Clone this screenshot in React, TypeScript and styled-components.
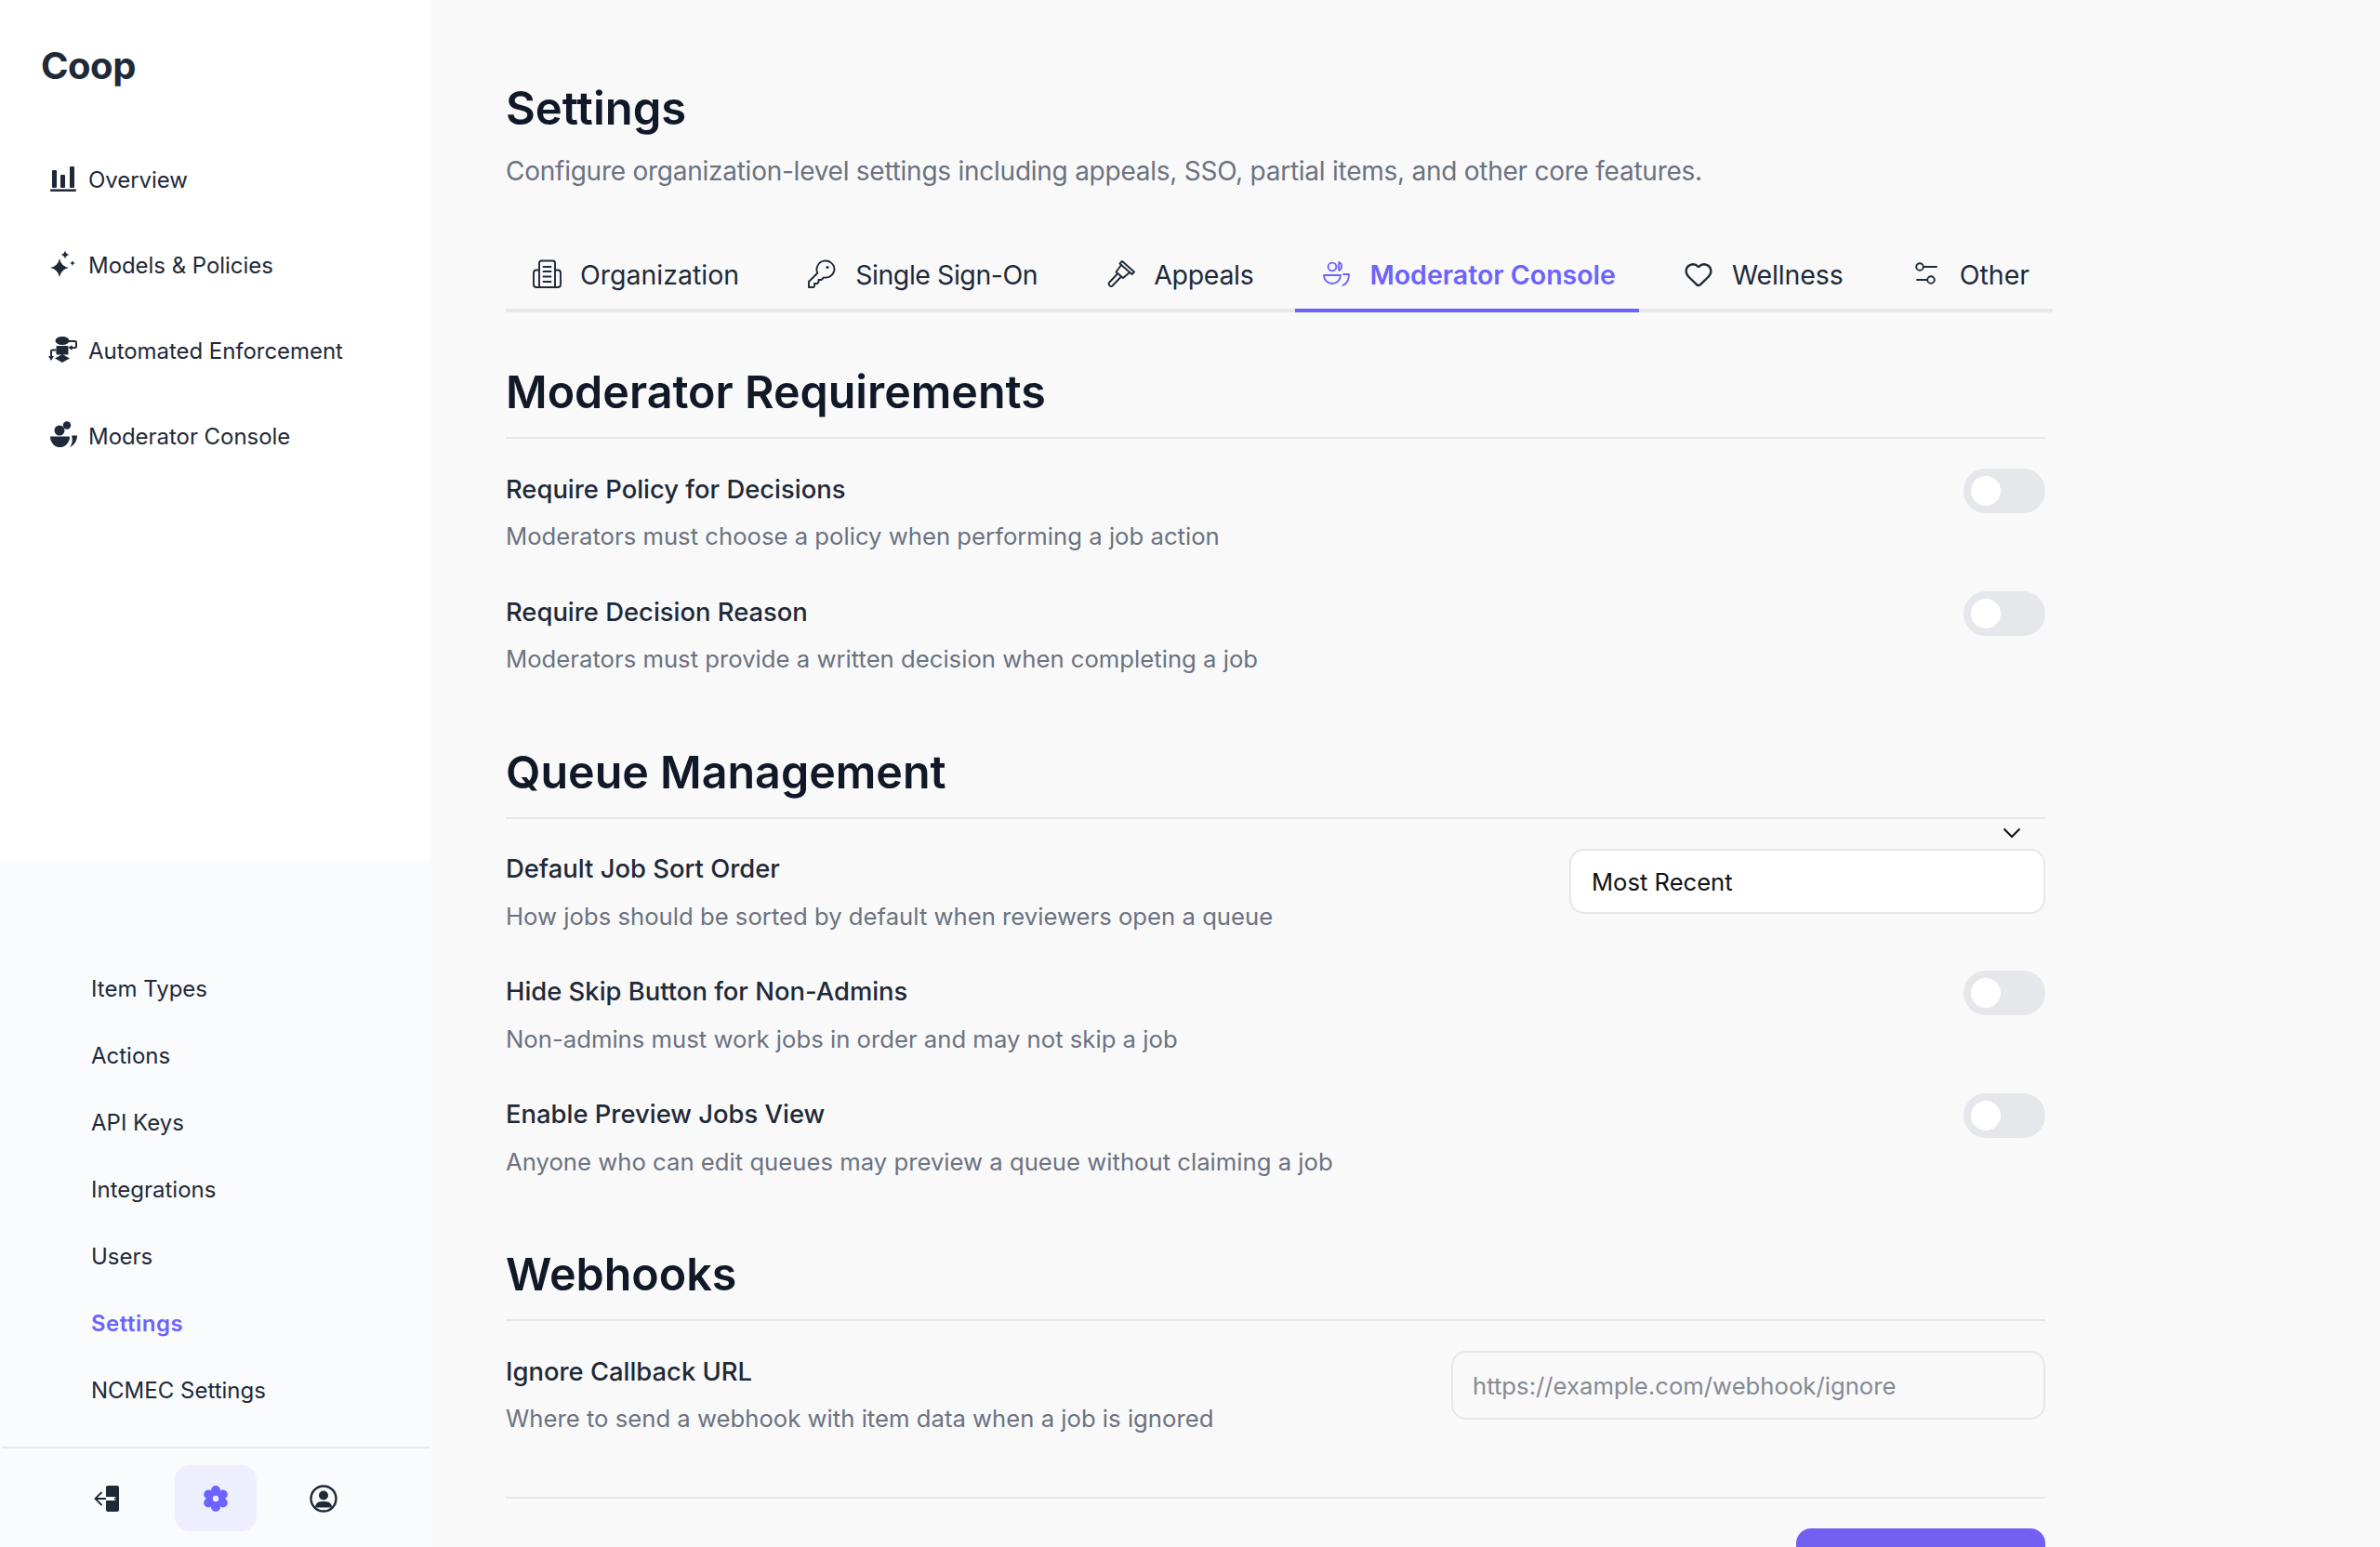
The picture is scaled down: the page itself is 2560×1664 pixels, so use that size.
import React from "react";
import styled, { createGlobalStyle } from "styled-components";
import { Heart } from "lucide-react";

const GlobalStyle = createGlobalStyle`
  html, body {
    margin: 0;
    padding: 0;
    height: 1664px;
    overflow: hidden;
    background: #f9f9fa;
    font-family: "Inter", "Liberation Sans", sans-serif;
    color: #1f2937;
  }
  * {
    box-sizing: border-box;
  }
`;

const DARK = "#1f2937";
const PURPLE = "#6c63ff";

const Star = ({ cx, cy, r }: { cx: number; cy: number; r: number }) => {
  const k = r * 0.16;
  return (
    <path
      d={`M${cx} ${cy - r}Q${cx + k} ${cy - k} ${cx + r} ${cy}Q${cx + k} ${cy + k} ${cx} ${cy + r}Q${cx - k} ${cy + k} ${cx - r} ${cy}Q${cx - k} ${cy - k} ${cx} ${cy - r}Z`}
    />
  );
};

const OverviewIcon = () => (
  <svg width="32" height="32" viewBox="0 0 32 32" fill={DARK}>
    <rect x="4" y="6" width="5" height="19" rx="1" />
    <rect x="13" y="11" width="5" height="14" rx="1" />
    <rect x="23" y="2" width="5" height="23" rx="1" />
    <rect x="2" y="26.5" width="28" height="2.4" rx="1" />
  </svg>
);

const ModelsIcon = () => (
  <svg width="32" height="32" viewBox="0 0 32 32" fill={DARK}>
    <Star cx={12} cy={19} r={10} />
    <Star cx={18} cy={5} r={4.6} />
    <Star cx={26} cy={14} r={2.8} />
  </svg>
);

const AutomationIcon = () => (
  <svg width="32" height="32" viewBox="0 0 32 32" fill={DARK}>
    <ellipse cx="15" cy="5.5" rx="7.5" ry="4.6" />
    <rect x="8.5" y="11" width="13" height="9.5" rx="1" />
    <path d="M15 20L23 24.5L15 29L7 24.5Z" />
    <path
      d="M22 6H28.5Q30 6 30 7.5V11.5Q30 13 28.5 13H24M8.5 15.5H4.5Q3 15.5 3 17V22"
      fill="none"
      stroke={DARK}
      strokeWidth="2"
    />
    <path d="M21.5 13L25.5 10V16ZM3 27L0 22H6Z" />
  </svg>
);

const ModeratorIcon = () => (
  <svg width="32" height="32" viewBox="0 0 32 32" fill={DARK}>
    <circle cx="12" cy="10" r="5.5" />
    <circle cx="20" cy="4.5" r="4.2" />
    <path d="M2 16.5H23A10.5 11.5 0 0 1 2 16.5Z" />
    <path d="M25 15.5H31C31 21 28 26 23 28C26 24 26.5 20 25 15.5Z" />
  </svg>
);

const LogoutIcon = () => (
  <svg width="32" height="32" viewBox="0 0 32 32">
    <rect x="14" y="2" width="14" height="28" rx="2" fill={DARK} />
    <path d="M23 16H2.5M9 9.5L2.5 16L9 22.5" fill="none" stroke="#fafbfd" strokeWidth="4" strokeLinecap="round" />
    <path d="M24 16H2.5M9 9.5L2.5 16L9 22.5" fill="none" stroke={DARK} strokeWidth="1.8" strokeLinecap="round" />
    <path d="M14 14.2H23V17.8H14Z" fill="#fafbfd" />
  </svg>
);

const GearIcon = () => (
  <svg width="32" height="32" viewBox="0 0 32 32" fill={PURPLE}>
    <circle cx="16" cy="7" r="5" />
    <circle cx="16" cy="25" r="5" />
    <circle cx="8.2" cy="11.5" r="5" />
    <circle cx="23.8" cy="11.5" r="5" />
    <circle cx="8.2" cy="20.5" r="5" />
    <circle cx="23.8" cy="20.5" r="5" />
    <circle cx="16" cy="16" r="8" />
    <circle cx="16" cy="16" r="3.2" fill="#edefff" />
  </svg>
);

const UserCircleIcon = () => (
  <svg width="32" height="32" viewBox="0 0 32 32">
    <circle cx="16" cy="16" r="13.5" fill="none" stroke={DARK} strokeWidth="2.4" />
    <circle cx="16" cy="12.5" r="5" fill={DARK} />
    <path d="M7 24.5C8 20 11 19 16 19C21 19 24 20 25 24.5L23.5 25.5H8.5Z" fill={DARK} />
  </svg>
);

const OrgIcon = () => (
  <svg width="32" height="32" viewBox="0 0 32 32" fill="none" stroke="currentColor" strokeWidth="1.9" strokeLinecap="round" strokeLinejoin="round">
    <path d="M8 30V4Q8 1.5 10.5 1.5H22.5Q25 1.5 25 4V30Z" />
    <path d="M8 11.5H5Q2 11.5 2 14.5V27Q2 30 5 30H28Q31 30 31 27V14.5Q31 11.5 28 11.5H25" />
    <path d="M12.5 8H20.5M12.5 13H20.5M12.5 18.5H20.5M12.5 24H20.5" />
  </svg>
);

const KeyIcon = () => (
  <svg width="32" height="32" viewBox="0 0 32 32" fill="none" stroke="currentColor" strokeWidth="1.9" strokeLinejoin="round">
    <path d="M29.5 11A9.5 9.5 0 1 0 11.3 14.8L2 24V30H7L8 29V26H11L12.5 24.5V22H15.5L18.1 19.4A9.5 9.5 0 0 0 29.5 11Z" />
    <circle cx="22" cy="8.5" r="1.6" fill="currentColor" stroke="none" />
  </svg>
);

const GavelIcon = () => (
  <svg width="32" height="32" viewBox="0 0 32 32" fill="none" stroke="currentColor" strokeWidth="1.9" strokeLinejoin="round" strokeLinecap="round">
    <path d="M18 2L31 13.5L28.5 16L15.5 4.5Z" />
    <path d="M17 6L11.5 13.5L19 20L25.5 14.5" />
    <path d="M12.5 16L4 25A2 2 0 0 0 4 27.5L5 28.5A2 2 0 0 0 7.5 28.5L16.5 19" />
  </svg>
);

const ConsoleIcon = () => (
  <svg width="32" height="32" viewBox="0 0 32 32" fill="none" stroke="currentColor" strokeWidth="1.9" strokeLinejoin="round" strokeLinecap="round">
    <circle cx="12" cy="8" r="4.4" />
    <path d="M19.5 3A5 5 0 0 1 22 7.5A5 5 0 0 1 19.5 12Q18 7.5 19.5 3Z" />
    <path d="M3 17H21A9 9 0 0 1 3 17Z" />
    <path d="M24 16H30C30 21 28 26 23.5 28" />
  </svg>
);

const SlidersIcon = () => (
  <svg width="32" height="32" viewBox="0 0 32 32" fill="none" stroke="currentColor" strokeWidth="1.9" strokeLinecap="round">
    <circle cx="9" cy="8" r="3.8" />
    <path d="M13 8H27M6 22H17" />
    <circle cx="21" cy="22" r="3.8" />
  </svg>
);

const Page = styled.div`
  display: flex;
  height: 1664px;
  overflow: hidden;
`;

const Sidebar = styled.aside`
  width: 464px;
  flex: none;
  display: flex;
  flex-direction: column;
  background: #fff;
`;

const SidebarTop = styled.div`
  height: 925px;
  flex: none;
`;

const Logo = styled.div`
  height: 147px;
  padding: 49px 0 0 44px;
  font-size: 40px;
  line-height: 44px;
  font-weight: 700;
  letter-spacing: -0.5px;
  color: #1f2937;
`;

const NavItem = styled.div`
  height: 92px;
  padding-left: 52px;
  display: flex;
  align-items: center;
  gap: 11px;
  font-size: 24px;
  letter-spacing: -0.05px;
  color: #1f2937;
`;

const SidebarBottom = styled.div`
  flex: 1;
  display: flex;
  flex-direction: column;
  padding-top: 102px;
  background: #fafbfd;
`;

const SubItem = styled.div<{ $active?: boolean }>`
  height: 72px;
  padding-left: 98px;
  display: flex;
  align-items: center;
  font-size: 24px;
  font-weight: ${(p) => (p.$active ? 600 : 400)};
  letter-spacing: ${(p) => (p.$active ? "0.5px" : "0")};
  color: ${(p) => (p.$active ? PURPLE : "#1f2937")};
`;

const IconBar = styled.div`
  margin: 25px 2px 0;
  padding-top: 18px;
  border-top: 2px solid #e5e7eb;
  display: flex;
  justify-content: center;
  gap: 28px;
`;

const IconButton = styled.button<{ $active?: boolean }>`
  width: 88px;
  height: 71px;
  padding: 0;
  border: none;
  border-radius: 16px;
  display: flex;
  align-items: center;
  justify-content: center;
  background: ${(p) => (p.$active ? "#edefff" : "transparent")};
`;

const Main = styled.main`
  width: 1744px;
  flex: none;
  padding: 90px 0 0 80px;
`;

const Title = styled.h1`
  margin: 0;
  font-size: 49px;
  line-height: 54px;
  font-weight: 600;
  color: #111827;
`;

const Subtitle = styled.p`
  margin: 22px 0 0;
  font-size: 28px;
  line-height: 36px;
  letter-spacing: -0.25px;
  color: #6b7280;
`;

const Tabs = styled.div`
  width: 1664px;
  height: 78px;
  margin-top: 56px;
  display: flex;
  gap: 20px;
  border-bottom: 4px solid #e5e7eb;
`;

const Tab = styled.div<{ $active?: boolean; $tracking: number }>`
  flex: none;
  height: 78px;
  padding: 0 25px 0 28px;
  display: flex;
  align-items: center;
  gap: 20px;
  white-space: nowrap;
  font-size: 28.5px;
  letter-spacing: ${(p) => p.$tracking}px;
  font-weight: ${(p) => (p.$active ? 600 : 400)};
  color: ${(p) => (p.$active ? PURPLE : "#1f2937")};
  border-bottom: 4px solid ${(p) => (p.$active ? PURPLE : "transparent")};
`;

const Section = styled.section`
  width: 1656px;
  margin-top: 56px;

  & + & {
    margin-top: 75px;
  }
`;

const SectionTitle = styled.h2`
  margin: 0;
  padding-bottom: 18px;
  border-bottom: 2px solid #e5e7eb;
  font-size: 48.4px;
  line-height: 60px;
  font-weight: 600;
  color: #111827;
`;

const Rows = styled.div`
  padding-top: 35.5px;
  display: flex;
  flex-direction: column;
  gap: 46px;
`;

const Row = styled.div`
  height: 86px;
  display: flex;
  justify-content: space-between;
  align-items: flex-start;
`;

const Label = styled.div`
  font-size: 27.4px;
  line-height: 36px;
  font-weight: 500;
  color: #1f2937;
`;

const Description = styled.div`
  margin-top: 15.5px;
  font-size: 25.7px;
  line-height: 36px;
  color: #6b7280;
`;

const Toggle = styled.div`
  width: 88px;
  height: 48px;
  margin-top: -4px;
  padding: 8px;
  border-radius: 24px;
  background: #e5e7eb;

  &::before {
    content: "";
    display: block;
    width: 32px;
    height: 32px;
    border-radius: 50%;
    background: #fff;
  }
`;

const SelectBox = styled.div`
  position: relative;
  width: 512px;
  height: 70px;
  margin-top: -3px;
  padding-left: 22px;
  display: flex;
  align-items: center;
  border: 2px solid #e5e7eb;
  border-radius: 16px;
  background: #fff;
  font-size: 25.6px;
  color: #111;
`;

const Chevron = styled.svg`
  position: absolute;
  top: -25px;
  right: 24px;
`;

const TextInput = styled.div`
  width: 639px;
  height: 74px;
  margin-top: -4px;
  padding: 2px 0 0 21px;
  display: flex;
  align-items: center;
  border: 2px solid #e5e7eb;
  border-radius: 16px;
  font-size: 25.7px;
  color: #868a93;
`;

const Footer = styled.div`
  width: 1656px;
  margin-top: 67px;
  padding-top: 32px;
  border-top: 2px solid #e5e7eb;
  display: flex;
  justify-content: flex-end;
`;

const SaveButton = styled.button`
  width: 268px;
  height: 72px;
  border: none;
  border-radius: 16px;
  background: #7360f2;
`;

const navItems = [
  { label: "Overview", icon: <OverviewIcon /> },
  { label: "Models & Policies", icon: <ModelsIcon /> },
  { label: "Automated Enforcement", icon: <AutomationIcon /> },
  { label: "Moderator Console", icon: <ModeratorIcon /> },
];

const subItems = ["Item Types", "Actions", "API Keys", "Integrations", "Users", "Settings", "NCMEC Settings"];

const tabs = [
  { label: "Organization", icon: <OrgIcon />, tracking: 0 },
  { label: "Single Sign-On", icon: <KeyIcon />, tracking: -0.45 },
  { label: "Appeals", icon: <GavelIcon />, tracking: -0.3 },
  { label: "Moderator Console", icon: <ConsoleIcon />, tracking: 0 },
  { label: "Wellness", icon: <Heart size={32} strokeWidth={1.8} />, tracking: -0.1 },
  { label: "Other", icon: <SlidersIcon />, tracking: 0 },
];

const RowText = ({ label, description }: { label: string; description: string }) => (
  <div>
    <Label>{label}</Label>
    <Description>{description}</Description>
  </div>
);

const App: React.FC = () => {
  return (
    <Page>
      <GlobalStyle />
      <Sidebar>
        <SidebarTop>
          <Logo>Coop</Logo>
          {navItems.map((item) => (
            <NavItem key={item.label}>
              {item.icon}
              {item.label}
            </NavItem>
          ))}
        </SidebarTop>
        <SidebarBottom>
          {subItems.map((item) => (
            <SubItem key={item} $active={item === "Settings"}>
              {item}
            </SubItem>
          ))}
          <IconBar>
            <IconButton aria-label="Log out">
              <LogoutIcon />
            </IconButton>
            <IconButton $active aria-label="Settings">
              <GearIcon />
            </IconButton>
            <IconButton aria-label="Account">
              <UserCircleIcon />
            </IconButton>
          </IconBar>
        </SidebarBottom>
      </Sidebar>
      <Main>
        <Title>Settings</Title>
        <Subtitle>Configure organization-level settings including appeals, SSO, partial items, and other core features.</Subtitle>
        <Tabs>
          {tabs.map((tab) => (
            <Tab key={tab.label} $active={tab.label === "Moderator Console"} $tracking={tab.tracking}>
              {tab.icon}
              {tab.label}
            </Tab>
          ))}
        </Tabs>
        <Section>
          <SectionTitle>Moderator Requirements</SectionTitle>
          <Rows>
            <Row>
              <RowText label="Require Policy for Decisions" description="Moderators must choose a policy when performing a job action" />
              <Toggle />
            </Row>
            <Row>
              <RowText label="Require Decision Reason" description="Moderators must provide a written decision when completing a job" />
              <Toggle />
            </Row>
          </Rows>
        </Section>
        <Section>
          <SectionTitle>Queue Management</SectionTitle>
          <Rows>
            <Row>
              <RowText label="Default Job Sort Order" description="How jobs should be sorted by default when reviewers open a queue" />
              <SelectBox>
                <Chevron width="20" height="12" viewBox="0 0 20 12" fill="none" stroke="#111" strokeWidth="2">
                  <path d="M1.5 1.5L10 10L18.5 1.5" />
                </Chevron>
                Most Recent
              </SelectBox>
            </Row>
            <Row>
              <RowText label="Hide Skip Button for Non-Admins" description="Non-admins must work jobs in order and may not skip a job" />
              <Toggle />
            </Row>
            <Row>
              <RowText label="Enable Preview Jobs View" description="Anyone who can edit queues may preview a queue without claiming a job" />
              <Toggle />
            </Row>
          </Rows>
        </Section>
        <Section>
          <SectionTitle>Webhooks</SectionTitle>
          <Rows>
            <Row>
              <RowText label="Ignore Callback URL" description="Where to send a webhook with item data when a job is ignored" />
              <TextInput>https://example.com/webhook/ignore</TextInput>
            </Row>
          </Rows>
        </Section>
        <Footer>
          <SaveButton aria-label="Save" />
        </Footer>
      </Main>
    </Page>
  );
};

export default App;
